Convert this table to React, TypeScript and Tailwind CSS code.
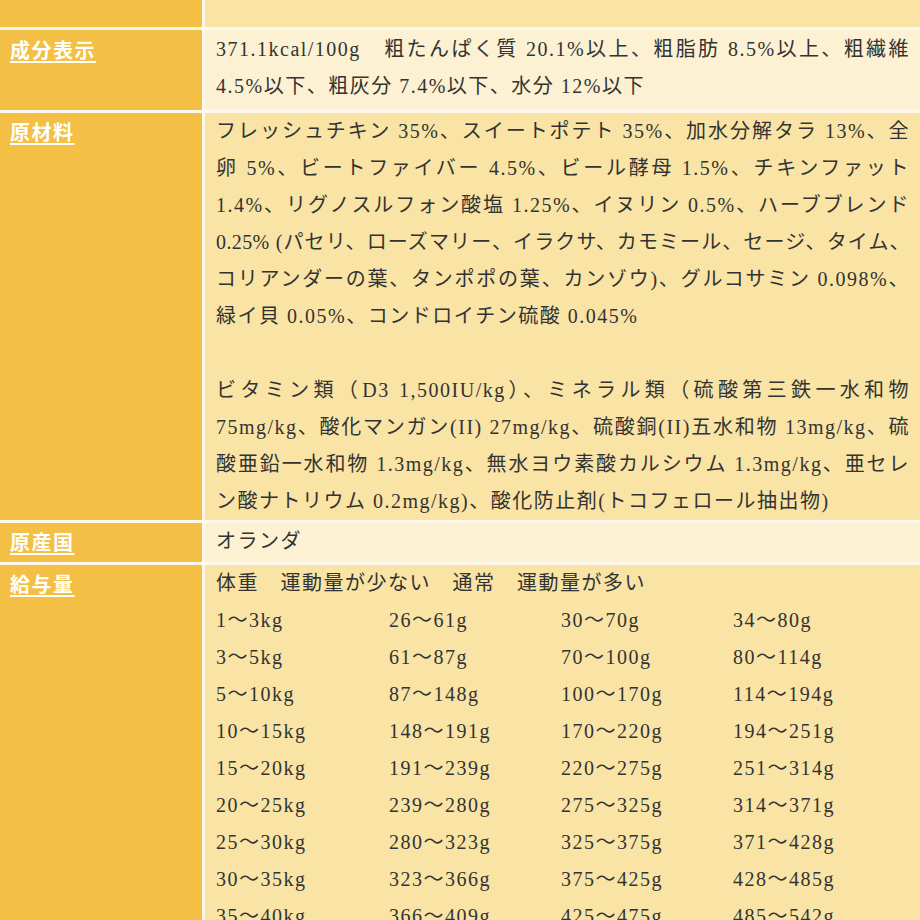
import React from "react";

const LEFT = "bg-[#f3bf44]";
const DARK = "bg-[#f9e4a5]";
const LIGHT = "bg-[#fcf1d2]";

function Label({ children }: { children: React.ReactNode }) {
  return (
    <span className="font-bold text-white underline decoration-2 underline-offset-[3px] [font-family:'Noto_Sans_CJK_JP','Noto_Sans',sans-serif]">
      {children}
    </span>
  );
}

function J({ children, tight }: { children: React.ReactNode; tight?: boolean }) {
  return (
    <div
      className={
        tight
          ? "text-justify [text-align-last:justify] whitespace-nowrap tracking-[0.4px]"
          : "text-justify [text-align-last:justify] whitespace-nowrap"
      }
    >
      {children}
    </div>
  );
}

function L({ children }: { children: React.ReactNode }) {
  return <div className="whitespace-nowrap">{children}</div>;
}

const feed: string[][] = [
  ["1〜3kg", "26〜61g", "30〜70g", "34〜80g"],
  ["3〜5kg", "61〜87g", "70〜100g", "80〜114g"],
  ["5〜10kg", "87〜148g", "100〜170g", "114〜194g"],
  ["10〜15kg", "148〜191g", "170〜220g", "194〜251g"],
  ["15〜20kg", "191〜239g", "220〜275g", "251〜314g"],
  ["20〜25kg", "239〜280g", "275〜325g", "314〜371g"],
  ["25〜30kg", "280〜323g", "325〜375g", "371〜428g"],
  ["30〜35kg", "323〜366g", "375〜425g", "428〜485g"],
  ["35〜40kg", "366〜409g", "425〜475g", "485〜542g"],
];

export default function App() {
  return (
    <div className="w-[920px] h-[920px] overflow-hidden bg-[#fdf8eb] flex flex-col gap-[3px] text-[20px] leading-[37px] tracking-[1.5px] text-[#333333] [font-family:'Liberation_Serif','Noto_Sans_CJK_JP',serif]">
      <div className="grid grid-cols-[202px_1fr] gap-[3px] h-[27px] shrink-0">
        <div className={LEFT}></div>
        <div className={DARK}></div>
      </div>

      <div className="grid grid-cols-[202px_1fr] gap-[3px] shrink-0">
        <div className={`${LEFT} pl-[10px] pt-[1px]`}>
          <Label>成分表示</Label>
        </div>
        <div className={`${LIGHT} pl-[11px] pr-[10px] pt-[1px] pb-[5px]`}>
          <J>371.1kcal/100g　粗たんぱく質 20.1%以上、粗脂肪 8.5%以上、粗繊維</J>
          <L>4.5%以下、粗灰分 7.4%以下、水分 12%以下</L>
        </div>
      </div>

      <div className="grid grid-cols-[202px_1fr] gap-[3px] shrink-0">
        <div className={`${LEFT} pl-[10px]`}>
          <Label>原材料</Label>
        </div>
        <div className={`${DARK} pl-[11px] pr-[10px]`}>
          <J>フレッシュチキン 35%、スイートポテト 35%、加水分解タラ 13%、全</J>
          <J>卵 5%、ビートファイバー 4.5%、ビール酵母 1.5%、チキンファット</J>
          <J>1.4%、リグノスルフォン酸塩 1.25%、イヌリン 0.5%、ハーブブレンド</J>
          <J tight>0.25% (パセリ、ローズマリー、イラクサ、カモミール、セージ、タイム、</J>
          <J>コリアンダーの葉、タンポポの葉、カンゾウ)、グルコサミン 0.098%、</J>
          <L>緑イ貝 0.05%、コンドロイチン硫酸 0.045%</L>
          <div className="h-[37px]"></div>
          <J>ビタミン類（D3 1,500IU/kg）、ミネラル類（硫酸第三鉄一水和物</J>
          <J>75mg/kg、酸化マンガン(II) 27mg/kg、硫酸銅(II)五水和物 13mg/kg、硫</J>
          <J>酸亜鉛一水和物 1.3mg/kg、無水ヨウ素酸カルシウム 1.3mg/kg、亜セレ</J>
          <L>ン酸ナトリウム 0.2mg/kg)、酸化防止剤(トコフェロール抽出物)</L>
        </div>
      </div>

      <div className="grid grid-cols-[202px_1fr] gap-[3px] shrink-0">
        <div className={`${LEFT} pl-[10px]`}>
          <Label>原産国</Label>
        </div>
        <div className={`${LIGHT} pl-[11px] pr-[10px]`}>
          <L>オランダ</L>
        </div>
      </div>

      <div className="grid grid-cols-[202px_1fr] gap-[3px] shrink-0">
        <div className={`${LEFT} pl-[10px]`}>
          <Label>給与量</Label>
        </div>
        <div className={`${DARK} pl-[11px] pr-[10px]`}>
          <L>体重　運動量が少ない　通常　運動量が多い</L>
          <div className="grid grid-cols-[173px_172px_172px_1fr]">
            {feed.map((row, i) =>
              row.map((cell, j) => (
                <div key={`${i}-${j}`} className="whitespace-nowrap">
                  {cell}
                </div>
              ))
            )}
          </div>
        </div>
      </div>
    </div>
  );
}
